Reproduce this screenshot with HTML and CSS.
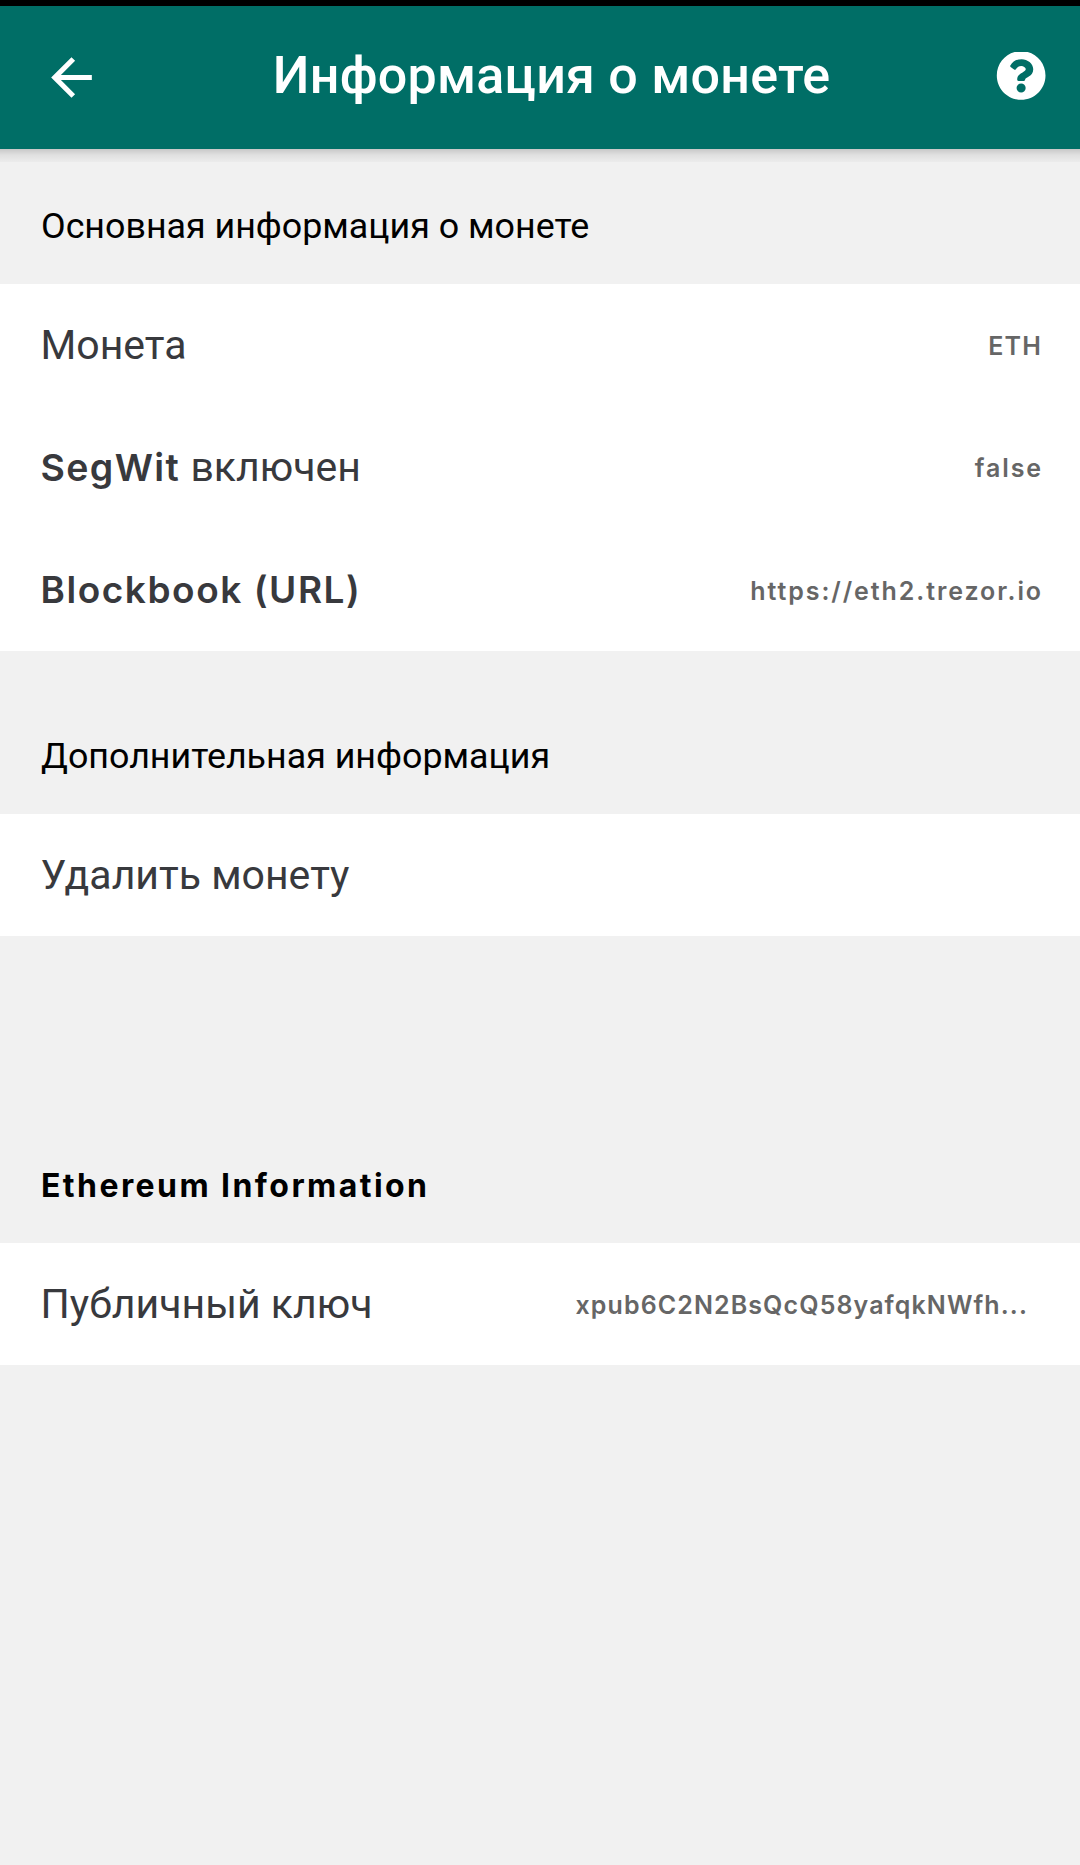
FILE: index.html
```
<!DOCTYPE html>
<html lang="ru">
<head>
  <meta charset="UTF-8">
  <title>Информация о монете</title>
  <meta name="viewport" content="width=device-width, initial-scale=1.0">
  <link rel="stylesheet" href="styles.css">
</head>
<body>
  <header class="toolbar">
    <svg class="back-icon" viewBox="0 0 24 24"><path d="M20 11H7.83l5.59-5.59L12 4l-8 8 8 8 1.41-1.41L7.83 13H20v-2z"/></svg>
    <h1>Информация о монете</h1>
    <svg class="help-icon" viewBox="0 17 512 495"><path d="M504 256c0 136.997-111.043 248-248 248S8 392.997 8 256C8 119.083 119.043 8 256 8s248 111.083 248 248zM262.655 90c-54.497 0-89.255 22.957-116.549 63.758-3.536 5.286-2.353 12.415 2.715 16.258l34.699 26.31c5.205 3.947 12.621 3.008 16.665-2.122 17.864-22.658 30.113-35.797 57.303-35.797 20.429 0 45.698 13.148 45.698 32.958 0 14.976-12.363 22.667-32.534 33.976C247.128 238.528 216 254.941 216 296v4c0 6.627 5.373 12 12 12h56c6.627 0 12-5.373 12-12v-1.333c0-28.462 83.186-29.647 83.186-106.667 0-58.002-60.165-102-116.531-102zM256 338c-25.365 0-46 20.635-46 46 0 25.364 20.635 46 46 46s46-20.636 46-46c0-25.364-20.635-46-46-46z"/></svg>
  </header>

  <main>
    <h2>Основная информация о монете</h2>
    <div class="list list-main">
      <div class="row">
        <span class="label">Монета</span>
        <span class="value value-coin">ETH</span>
      </div>
      <div class="row">
        <span class="label"><span class="latin">SegWit</span> включен</span>
        <span class="value">false</span>
      </div>
      <div class="row">
        <span class="label label-url">Blockbook (URL)</span>
        <span class="value">https://eth2.trezor.io</span>
      </div>
    </div>

    <h2 class="extra-title">Дополнительная информация</h2>
    <div class="list">
      <div class="row">
        <span class="label">Удалить монету</span>
      </div>
    </div>

    <h2 class="chain-title">Ethereum Information</h2>
    <div class="list">
      <div class="row">
        <span class="label">Публичный ключ</span>
        <span class="value value-key">xpub6C2N2BsQcQ58yafqkNWfh...</span>
      </div>
    </div>
  </main>
</body>
</html>
```
FILE: styles.css
```
body {
  margin: 0;
  background: #f1f1f1;
  font-family: Roboto, sans-serif;
}
.toolbar {
  display: flex;
  align-items: center;
  box-sizing: border-box;
  height: 149px;
  padding: 0 33.5px 0 41px;
  border-top: 6px solid #000;
  background: #006e66;
  color: #fff;
}
.toolbar svg {
  flex: none;
  fill: #fff;
}
.back-icon {
  width: 61px;
  height: 61px;
}
.help-icon {
  width: 50.3px;
  height: 48.6px;
  margin-bottom: 3px;
}
h1 {
  flex: 1;
  margin: 0;
  padding: 0 0 3px 5px;
  font-size: 52px;
  font-weight: 500;
  line-height: 60px;
  letter-spacing: 0.25px;
  text-align: center;
}
main {
  padding-top: 1px;
  background: linear-gradient(#c8c8c8, #e0e0e0 6px, #ececec 13px, #f1f1f1 13px);
}
h2 {
  margin: 55px 0 37px;
  padding-left: 41px;
  color: #000;
  font-size: 35.8px;
  font-weight: 400;
  line-height: 42px;
}
.extra-title {
  margin: 84px 0 37px;
}
.chain-title {
  margin: 229px 0 36px;
  font-family: Inter, sans-serif;
  font-size: 32px;
  font-weight: 700;
  letter-spacing: 2.43px;
}
.list {
  display: grid;
  grid-auto-rows: 1fr;
  height: 122px;
  background: #fff;
}
.list-main {
  height: 367px;
}
.row {
  display: flex;
  align-items: center;
  justify-content: space-between;
  padding: 0 37px 0 40.5px;
}
.label {
  color: #38393d;
  font-size: 41px;
  line-height: 48px;
}
.latin {
  font-family: Inter, sans-serif;
  font-size: 37.5px;
  font-weight: 600;
  line-height: 1;
  letter-spacing: 1.4px;
}
.label-url {
  font-family: Inter, sans-serif;
  font-size: 37px;
  font-weight: 600;
  letter-spacing: 1.55px;
}
.value {
  padding-top: 2px;
  color: #666;
  font-family: Inter, sans-serif;
  font-size: 25px;
  font-weight: 600;
  line-height: 30px;
  letter-spacing: 1.92px;
}
.value-coin {
  margin-right: 1px;
  letter-spacing: 1.18px;
}
.value-key {
  margin-right: 15px;
  letter-spacing: 1.1px;
}
```
